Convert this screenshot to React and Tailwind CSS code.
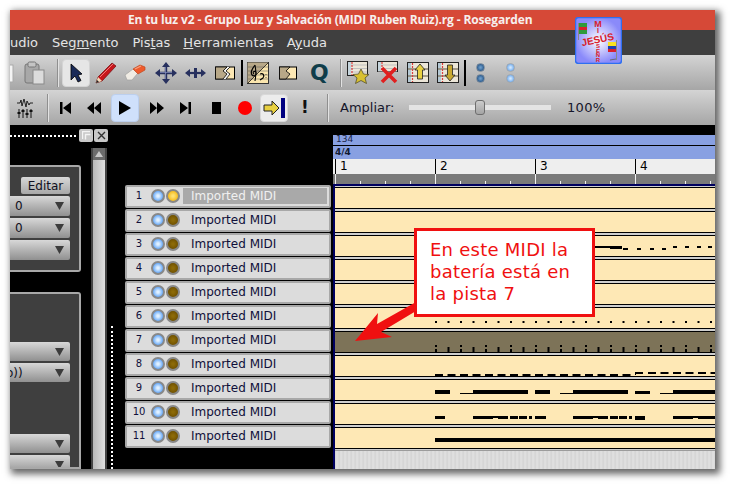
const UI = { fontFamily: '"DejaVu Sans", sans-serif' };

const TRACKS = [1, 2, 3, 4, 5, 6, 7, 8, 9, 10, 11];

const range = (start, end, step) => {
  const out = [];
  for (let x = start; x < end; x += step) out.push(x);
  return out;
};

// note drawings, x is relative to the start of the segment area (x=335)
const beats = range(100, 380, 12.5);
const NOTES = {
  3: [
    [260, 10, 27, 2], [275, 11, 12, 2], [288, 12, 5, 2], [302, 12, 4, 2], [315, 12, 4, 2], [327, 12, 4, 2],
    [338, 10, 4, 2], [350, 10, 4, 2], [362, 10, 4, 2], [373, 10, 4, 2],
  ],
  6: beats.map((x) => [x, 13, 2, 2]),
  7: beats.flatMap((x, i) =>
    i % 2 === 0 ? [[x, 13, 2, 2], [x, 17, 2, 3]] : [[x, 15, 2, 5]]
  ),
  8: [
    ...range(100, 300, 12.5).map((x) => [x, 18, 8, 2]),
    [300, 16, 1, 3], [300, 16, 8, 2],
    ...range(313, 380, 12.5).map((x) => [x, 16, 8, 2]),
  ],
  9: [
    [100, 10, 15, 4], [125, 13, 13, 1], [138, 10, 55, 4], [200, 10, 15, 4], [225, 13, 13, 1], [238, 10, 55, 4],
    [300, 11, 15, 3], [325, 13, 13, 1], [338, 10, 42, 4],
  ],
  10: [
    [100, 12, 10, 3], [138, 12, 20, 3], [158, 12, 5, 2], [163, 12, 10, 3], [175, 12, 8, 3], [184, 12, 8, 3], [194, 12, 3, 3], [200, 12, 11, 3],
    [238, 12, 20, 3], [258, 12, 5, 2], [263, 12, 10, 3], [275, 12, 8, 3], [284, 12, 8, 3], [294, 12, 3, 3],
    [300, 12, 10, 4], [338, 12, 20, 3], [358, 12, 5, 2], [363, 12, 17, 3],
  ],
  11: [[100, 10, 280, 4]],
};

function Doc() {
  return (
    <svg width="4" height="22" viewBox="0 0 4 22" className="shrink-0">
      <rect x="-6" y="3" width="9" height="17" fill="#f4f4f4" stroke="#aaa" />
    </svg>
  );
}

function Clipboard() {
  return (
    <svg width="21" height="24" viewBox="0 0 21 24" className="ml-[10px] shrink-0">
      <rect x="1" y="3" width="14" height="19" rx="2" fill="#a8a8a8" stroke="#777" />
      <rect x="4" y="1" width="8" height="5" rx="1.5" fill="#c4c4c4" stroke="#777" />
      <rect x="9" y="9" width="11" height="14" fill="#dcdcdc" stroke="#8a8a8a" />
    </svg>
  );
}

function Sep({ className }) {
  return <div className={`w-[2px] h-[28px] shrink-0 bg-[#e2e2e2] border-l border-[#8f8f8f] ${className}`} />;
}

function BlackSep({ className }) {
  return <div className={`w-[2px] h-[26px] shrink-0 bg-black ${className}`} />;
}

function Pointer() {
  return (
    <div className="ml-[3px] w-[28px] h-[28px] shrink-0 flex items-center justify-center bg-[#e6e6e6] rounded-sm border border-[#d4d4d4]">
      <svg width="14" height="20" viewBox="0 0 14 20">
        <path d="M2 1 L2 17 L6 13 L9 19 L12 17.5 L9 12 L13 11 Z" fill="#1a2a58" stroke="#000" strokeWidth="0.8" />
      </svg>
    </div>
  );
}

function Pencil() {
  return (
    <svg width="22" height="22" viewBox="0 0 22 22" className="ml-[5px] shrink-0">
      <path d="M1 21 L3 15 L17 1 L21 4 L7 19 Z" fill="#c8161c" stroke="#6d0a0d" strokeWidth="0.7" />
      <path d="M1 21 L3 15 L7 19 Z" fill="#f0d8b8" />
      <path d="M1 21 L2 18 L4 20 Z" fill="#222" />
      <path d="M5 15 L18 2" stroke="#f07a7a" strokeWidth="1" />
    </svg>
  );
}

function Eraser() {
  return (
    <svg width="22" height="18" viewBox="0 0 22 18" className="ml-[7px] shrink-0">
      <path d="M1 11 L9 5 L14 9 L8 16 L3 16 Z" fill="#f0ece4" stroke="#a0a0a0" strokeWidth="0.7" />
      <path d="M9 5 L16 1 L21 3 L21 6 L14 10 Z" fill="#ee5a2c" stroke="#c04a20" strokeWidth="0.7" />
      <path d="M11 5 L17 2" stroke="#f8a080" strokeWidth="1.2" />
    </svg>
  );
}

function MoveIcon() {
  return (
    <svg width="22" height="22" viewBox="0 0 22 22" className="ml-[9px] shrink-0">
      <path d="M11 3 V19 M3 11 H19" stroke="#27305e" strokeWidth="2.4" />
      <path d="M11 0 L15 5 H7 Z M11 22 L15 17 H7 Z M0 11 L5 7 V15 Z M22 11 L17 7 V15 Z" fill="#27305e" />
      <path d="M10.5 5 V17 M5 10.5 H17" stroke="#8a92c0" strokeWidth="0.7" />
    </svg>
  );
}

function ResizeIcon() {
  return (
    <svg width="21" height="12" viewBox="0 0 21 12" className="ml-[8px] shrink-0">
      <path d="M2 6 H19" stroke="#27305e" strokeWidth="2.2" />
      <path d="M0 6 L5 2 V10 Z M21 6 L16 2 V10 Z M9 1 H12 V11 H9 Z" fill="#27305e" />
    </svg>
  );
}

function SplitIcon({ className }) {
  return (
    <svg width="20" height="14" viewBox="0 0 20 14" className={`shrink-0 ${className}`}>
      <rect x="0.5" y="1" width="19" height="12" fill="#fde8b4" stroke="#000" />
      <path d="M12 1 L8 5 L12 8 L8 13 L11 13 L15 8 L11 5 L15 1 Z" fill="#f4f4f4" />
      <path d="M0.5 1 H12 L8 5 L12 8 L8 13 H0.5 Z" fill="#b8a888" stroke="#000" strokeWidth="0.8" />
      <path d="M15 1 L11 5 L15 8 L11 13" fill="none" stroke="#000" strokeWidth="0.8" />
    </svg>
  );
}

function JoinIcon({ className }) {
  return (
    <svg width="18" height="14" viewBox="0 0 18 14" className={`shrink-0 ${className}`}>
      <rect x="0.5" y="1" width="17" height="12" fill="#fde8b4" stroke="#000" />
      <path d="M0.5 1 H11 L7 5 L11 8 L7 13 H0.5 Z" fill="#b8a888" stroke="#000" strokeWidth="0.8" />
    </svg>
  );
}

function ScoreIcon() {
  return (
    <svg width="22" height="22" viewBox="0 0 22 22" className="ml-[4px] shrink-0">
      <rect x="0.5" y="0.5" width="21" height="21" fill="#fbe6ae" stroke="#333" />
      <path d="M0.5 21.5 L21.5 0.5 H0.5 Z" fill="#b8a888" />
      <path d="M1 5 H21 M1 9 H21 M1 13 H21 M1 17 H21" stroke="#555" strokeWidth="0.5" />
      <path d="M0.5 21.5 L21.5 0.5" stroke="#000" strokeWidth="0.7" />
      <path d="M8 3 C5 7 3 10 5 13 C7 15 10 13 9 10 C7 8 5 11 7 12 M8 3 C9 8 9 14 8 19" fill="none" stroke="#000" strokeWidth="1.1" />
      <path d="M13 12 C16 11 18 13 16 16 L13 18 M19 12.5 V13 M19 15 V15.5" fill="none" stroke="#000" strokeWidth="1.2" />
    </svg>
  );
}

// little score sheet behind the star and cross buttons
function SheetTop({ height }) {
  return (
    <>
      <rect x="0.5" y="0.5" width="20" height={height} fill="#ece6d8" stroke="#222" />
      <path d="M1 4 H20 M1 7.5 H20 M1 11 H20" stroke="#c0c0c0" strokeWidth="1" />
      <rect x="1" y="1" width="3" height={height - 1} fill="#c4d4dc" />
      <path d={`M5 1 V${height}`} stroke="#d83c3c" strokeWidth="1.2" strokeDasharray="2 1" />
    </>
  );
}

function StarIcon() {
  return (
    <svg width="23" height="23" viewBox="0 0 23 23" className="ml-[5px] shrink-0">
      <SheetTop height={14} />
      <path d="M14 8 L16.5 13 L22 13.5 L18 17 L19.5 22.5 L14 19.5 L8.5 22.5 L10 17 L6 13.5 L11.5 13 Z" fill="#d8c030" stroke="#555030" strokeWidth="0.8" />
    </svg>
  );
}

function DeleteIcon() {
  return (
    <svg width="22" height="23" viewBox="0 0 22 23" className="ml-[7px] shrink-0">
      <SheetTop height={10} />
      <path d="M5 7 L19 21 M19 7 L5 21" stroke="#e02020" strokeWidth="3.6" />
    </svg>
  );
}

function MoveSheetIcon({ className, d, fill }) {
  return (
    <svg width="22" height="21" viewBox="0 0 22 21" className={`shrink-0 ${className}`}>
      <rect x="0.5" y="0.5" width="21" height="20" fill="#ece6d8" stroke="#222" />
      <rect x="1" y="1" width="3" height="19" fill="#b4c8d4" />
      <path d="M1 7 H21 M1 14 H21" stroke="#8a8270" strokeWidth="1.6" />
      <path d="M5.5 1 V20" stroke="#d83c3c" strokeWidth="1.2" strokeDasharray="2 1" />
      <path d={d} fill={fill} stroke="#222" strokeWidth="0.8" />
    </svg>
  );
}

function Dots({ dark, className }) {
  const cls = dark
    ? 'bg-[radial-gradient(circle,#6c9cc8_10%,#2c5c90_70%)] border-[#7a8a9a]'
    : 'bg-[radial-gradient(circle,#d0e8ff_10%,#78b0f0_70%)] border-[#a0a8b0]';
  return (
    <div className={`w-[9px] flex flex-col gap-[2px] shrink-0 ${className}`}>
      <div className={`w-[9px] h-[9px] rounded-full border ${cls}`} />
      <div className={`w-[9px] h-[9px] rounded-full border ${cls}`} />
    </div>
  );
}

function Mixer() {
  return (
    <svg width="16" height="20" viewBox="0 0 16 20" className="ml-[7px] shrink-0">
      <path d="M0 5 H3 L4 2 L5 8 L7 1 L9 9 L10 3 L12 7 L13 5 H16" fill="none" stroke="#111" strokeWidth="0.9" />
      <path d="M2 11 V20 M6 11 V20 M10 11 V20 M14 11 V20" stroke="#111" strokeWidth="1" />
      <path d="M0.5 15 H3.5 M4.5 13 H7.5 M8.5 16 H11.5 M12.5 13 H15.5" stroke="#111" strokeWidth="2" />
    </svg>
  );
}

function Transport({ className, width = 14, d }) {
  return (
    <svg width={width} height="14" viewBox={`0 0 ${width} 14`} className={`shrink-0 ${className}`}>
      <path d={d} fill="#000" />
    </svg>
  );
}

function Logo() {
  return (
    <svg
      width="47"
      height="47"
      viewBox="0 0 47 47"
      className="absolute left-[575px] top-[17px]"
      style={{ fontFamily: '"Liberation Sans", sans-serif' }}
    >
      <defs>
        <radialGradient id="logoBg">
          <stop offset="0" stopColor="#ffffff" />
          <stop offset="1" stopColor="#8a8afa" />
        </radialGradient>
      </defs>
      <rect x="0.5" y="0.5" width="46" height="46" rx="3" fill="url(#logoBg)" stroke="#2f6ff0" strokeWidth="1.5" />
      <g fill="#d8202c" fontWeight="700" textAnchor="middle">
        <text x="23" y="10" fontSize="9">M</text>
        <text x="23" y="16" fontSize="7">I</text>
        <text x="23" y="26" fontSize="10" transform="rotate(-12 23 24)">JESÚS</text>
        <text x="23" y="31" fontSize="6">S</text>
        <text x="23" y="36" fontSize="6">E</text>
        <text x="23" y="40" fontSize="6">Ñ</text>
        <text x="23" y="45" fontSize="6">R</text>
      </g>
      <path d="M3.5 6 V23" stroke="#888" strokeWidth="1" />
      <rect x="4" y="6" width="8" height="4" fill="#2f9a3c" />
      <rect x="4" y="10" width="8" height="3" fill="#d8202c" />
      <rect x="4" y="13" width="8" height="4" fill="#2f9a3c" />
      <path d="M41.5 23 V43" stroke="#888" strokeWidth="1" />
      <rect x="33" y="25" width="8" height="4" fill="#f8e020" />
      <rect x="33" y="29" width="8" height="3" fill="#1c3fb0" />
      <rect x="33" y="32" width="8" height="3" fill="#d8202c" />
      <path d="M35 43 L41 42" stroke="#667" strokeWidth="1" />
    </svg>
  );
}

function Led({ color }) {
  const fill = {
    blue: 'bg-[radial-gradient(circle,#e0f0ff_15%,#5ea4f8_75%)]',
    amber: 'bg-[radial-gradient(circle,#ffe070_15%,#f4b818_75%)]',
    brown: 'bg-[radial-gradient(circle,#8c6a08_15%,#6e5000_75%)]',
  }[color];
  return <div className={`w-[14px] h-[14px] shrink-0 rounded-full border-2 border-[#888888] ${fill}`} />;
}

function TrackRow({ n }) {
  const selected = n === 1;
  return (
    <div className="h-[23px] w-[206px] pb-[2px] flex items-center bg-[#dcdcdc] border-2 border-[#a8a8a8] rounded-[2px]">
      <div className="w-[24px] shrink-0 text-center text-[10px] text-[#10103a]">{n}</div>
      <Led color="blue" />
      <div className="w-[1px] shrink-0" />
      <Led color={selected ? 'amber' : 'brown'} />
      <div
        className={`ml-[3px] w-[144px] h-[16px] pl-[8px] flex items-center text-[12px] ${
          selected ? 'bg-[#a9a9a9] text-[#f0f0f0]' : 'text-[#10103a]'
        }`}
      >
        Imported MIDI
      </div>
    </div>
  );
}

function SegmentRow({ n }) {
  const selected = n === 7;
  return (
    <div className="h-[24px] pt-[1px] bg-[#cfcfcf]">
      <div className={`h-[22px] border-y border-black ${selected ? 'bg-[#7d7358]' : 'bg-[#fee8b5]'}`}>
        <svg width="380" height="20" viewBox="0 0 380 20" className="block">
          {(NOTES[n] || []).map(([x, y, w, h], i) => (
            <rect key={i} x={x} y={y} width={w} height={h} fill="#000" />
          ))}
        </svg>
      </div>
    </div>
  );
}

function Combo({ label, className, labelClass = 'pl-[5px]' }) {
  return (
    <div
      className={`h-[19px] w-[60px] shrink-0 flex items-center justify-between pr-[6px] rounded-r-[2px] bg-gradient-to-b from-[#d8d8d8] to-[#909090] text-[12px] text-[#101020] ${className}`}
    >
      <span className={labelClass}>{label}</span>
      <svg width="9" height="8" viewBox="0 0 9 8">
        <path d="M0 0 H9 L4.5 8 Z" fill="#3c3c3c" />
      </svg>
    </div>
  );
}

export default function App() {
  return (
    <div className="w-[731px] h-[485px] bg-white pt-[10px] pl-[10px] relative overflow-hidden" style={UI}>
      <div className="w-[705px] h-[459px] flex flex-col shadow-[3px_3px_7px_2px_rgba(0,0,0,0.6)]">
        {/* title bar */}
        <div
          className="h-[20px] shrink-0 bg-[#d64937] pl-[118px] flex items-center text-[12px] tracking-[-0.14px] font-bold text-[#f6f0ee] whitespace-nowrap"
          style={{ fontFamily: '"Open Sans", sans-serif' }}
        >
          En tu luz v2 - Grupo Luz y Salvación (MIDI Ruben Ruiz).rg - Rosegarden
        </div>

        {/* menu */}
        <div className="h-[25px] shrink-0 bg-[#3f3f3f] flex items-center text-[13px] text-[#e4e4e4] whitespace-nowrap">
          <span>udio</span>
          <span className="ml-[14px]">Seg<span className="underline">m</span>ento</span>
          <span className="ml-[14px]">Pis<span className="underline">t</span>as</span>
          <span className="ml-[13px] tracking-[0.15px]"><span className="underline">H</span>erramientas</span>
          <span className="ml-[13px]">A<span className="underline">y</span>uda</span>
        </div>

        {/* edit toolbar */}
        <div className="h-[35px] shrink-0 flex items-center bg-gradient-to-b from-[#d4d4d4] to-[#a6a6a6]">
          <Doc />
          <Clipboard />
          <Sep className="ml-[12px]" />
          <Pointer />
          <Pencil />
          <Eraser />
          <MoveIcon />
          <ResizeIcon />
          <SplitIcon className="ml-[9px]" />
          <BlackSep className="ml-[6px]" />
          <ScoreIcon />
          <JoinIcon className="ml-[10px]" />
          <div className="ml-[13px] w-[18px] shrink-0 text-[22px] leading-none font-bold text-[#0f3d4a]">Q</div>
          <Sep className="ml-[12px]" />
          <StarIcon />
          <DeleteIcon />
          <MoveSheetIcon className="ml-[8px]" d="M13 2 L18 8 H15.5 V17 H10.5 V8 H8 Z" fill="#e8d040" />
          <MoveSheetIcon className="ml-[8px]" d="M13 19 L18 13 H15.5 V3 H10.5 V13 H8 Z" fill="#c8a830" />
          <BlackSep className="ml-[5px]" />
          <Dots dark className="ml-[10px]" />
          <Dots className="ml-[21px]" />
        </div>

        {/* transport toolbar */}
        <div className="h-[35px] shrink-0 flex items-center bg-gradient-to-b from-[#d4d4d4] to-[#a6a6a6]">
          <Mixer />
          <Sep className="ml-[14px]" />
          <Transport className="ml-[11px]" width={11} d="M0 1 H2.5 V13 H0 Z M11 1 V13 L3 7 Z" />
          <Transport className="ml-[16px]" d="M7 1 V13 L0 7 Z M14 1 V13 L7 7 Z" />
          <div className="ml-[10px] w-[28px] h-[28px] shrink-0 flex items-center justify-center bg-[#cfe0fb] rounded-sm border border-[#bccfee]">
            <Transport width={12} d="M0 0 L12 7 L0 14 Z" />
          </div>
          <Transport className="ml-[11px]" d="M0 1 L7 7 L0 13 Z M7 1 L14 7 L7 13 Z" />
          <Transport className="ml-[16px]" width={11} d="M0 1 L8 7 L0 13 Z M8.5 1 H11 V13 H8.5 Z" />
          <Transport className="ml-[21px]" width={9} d="M0 1 H9 V13 H0 Z" />
          <svg width="14" height="14" viewBox="0 0 14 14" className="ml-[17px] shrink-0">
            <circle cx="7" cy="7" r="7" fill="#f00" />
          </svg>
          <div className="ml-[8px] w-[28px] h-[28px] shrink-0 flex items-center justify-center bg-[#ececec] rounded-sm border border-[#d8d8d8]">
            <svg width="22" height="20" viewBox="0 0 22 20">
              <path d="M1 7 H9 V3 L16 10 L9 17 V13 H1 Z" fill="#e8d040" stroke="#222" strokeWidth="1" />
              <rect x="18" y="0" width="4" height="20" fill="#000080" />
            </svg>
          </div>
          <div className="ml-[12px] w-[10px] text-center text-[17px] leading-none font-bold text-[#111] shrink-0">!</div>
          <Sep className="ml-[17px]" />
          <span className="ml-[11px] text-[13px] text-[#15152a] w-[69px] shrink-0">Ampliar:</span>
          <div className="w-[142px] h-[5px] shrink-0 bg-[#e4e4e4] flex items-center">
            <div className="ml-[66px] w-[10px] h-[15px] rounded-[3px] bg-gradient-to-b from-[#cccccc] to-[#a4a4a4] border border-[#6e6e6e]" />
          </div>
          <span className="ml-[16px] text-[13px] text-[#15152a] tracking-[0.3px]">100%</span>
        </div>

        {/* main area */}
        <div className="flex-1 min-h-0 bg-black flex overflow-hidden">
          {/* instrument parameter panel */}
          <div className="w-[98px] shrink-0 flex flex-col">
            <div className="h-[23px] shrink-0 flex items-start pt-[4px]">
              <div className="w-[66px] mt-[6px] border-t-2 border-dotted border-white" />
              <div className="ml-[3px] w-[14px] h-[13px] rounded-[2px] bg-[#c8c8c8] flex items-center justify-center">
                <svg width="9" height="9" viewBox="0 0 9 9">
                  <path d="M0.5 8 V0.5 H8 M3.5 8.5 V3.5 H8.5" fill="none" stroke="#f4f4f4" strokeWidth="1.4" />
                </svg>
              </div>
              <div className="ml-[1px] w-[14px] h-[13px] rounded-[2px] bg-[#c8c8c8] flex items-center justify-center">
                <svg width="9" height="9" viewBox="0 0 9 9">
                  <path d="M1 1 L8 8 M8 1 L1 8" stroke="#333" strokeWidth="1.4" />
                </svg>
              </div>
            </div>
            <div className="flex-1 min-h-0 flex">
              <div className="w-[71px] shrink-0 pt-[17px] flex flex-col">
                <div className="h-[107px] shrink-0 bg-[#3f3f3f] border-2 border-l-0 border-[#a8a8a8] rounded-r-[3px] pt-[10px] flex flex-col">
                  <div className="ml-[11px] w-[49px] h-[17px] rounded-[2px] bg-gradient-to-b from-[#d8d8d8] to-[#a8a8a8] flex items-center justify-center text-[12px] text-[#101020]">
                    Editar
                  </div>
                  <Combo label="0" className="mt-[2px] h-[20px]" />
                  <Combo label="0" className="mt-[2px] h-[20px]" />
                  <Combo label="" className="mt-[2px] h-[20px]" />
                </div>
                <div className="mt-[20px] flex-1 min-h-0 overflow-hidden bg-[#3f3f3f] border-2 border-l-0 border-[#a8a8a8] rounded-tr-[3px] pt-[48px] flex flex-col">
                  <Combo label="" />
                  <Combo label="o))" className="mt-[2px]" labelClass="-ml-[4px]" />
                  <Combo label="" className="mt-[52px]" />
                  <Combo label="" className="mt-[2px]" />
                </div>
              </div>
              <div className="ml-[10px] w-[16px] shrink-0 border-x-2 border-[#444] bg-gradient-to-r from-[#b8b8b8] to-[#e0e0e0] flex flex-col">
                <div className="h-[12px] bg-[#6c6c6c] flex items-center justify-center">
                  <svg width="8" height="6" viewBox="0 0 8 6">
                    <path d="M4 0 L8 6 H0 Z" fill="#c8c8c8" />
                  </svg>
                </div>
              </div>
            </div>
          </div>

          {/* dotted splitter */}
          <div className="w-[17px] shrink-0 pt-[201px] pl-[3px]">
            <div className="h-full border-l-2 border-dotted border-white" />
          </div>

          {/* track buttons */}
          <div className="w-[206px] shrink-0 pt-[60px] flex flex-col gap-[1px]">
            {TRACKS.map((n) => (
              <TrackRow key={n} n={n} />
            ))}
          </div>

          {/* segment canvas */}
          <div className="ml-[2px] w-[382px] shrink-0 pt-[10px] flex flex-col">
            <div className="h-[11px] shrink-0 bg-[#88a0e2] border-b border-black pl-[3px] flex items-center text-[9px] text-[#18244a]">
              134
            </div>
            <div className="h-[13px] shrink-0 bg-[#88a0e2] pl-[2px] flex items-center text-[9px] font-bold text-[#101830]">
              4/4
            </div>
            <div className="h-[15px] shrink-0 pl-[2px] bg-[#eeeeee] flex">
              {['1', '2', '3', '4'].map((bar) => (
                <div key={bar} className="w-[100px] shrink-0 border-l border-black pl-[4px] text-[12px] leading-[15px] text-black">
                  {bar}
                </div>
              ))}
            </div>
            <svg width="382" height="10" viewBox="0 0 382 10" className="block shrink-0 bg-[#7a7a7a]">
              {range(2, 382, 25).map((x, i) => (
                <rect key={x} x={x} y={i % 4 === 0 ? 0 : 7} width="1" height={i % 4 === 0 ? 10 : 3} fill="#f0f0f0" />
              ))}
            </svg>
            <div className="flex-1 min-h-0 flex border-t-2 border-[#000060]">
              <div className="w-[2px] shrink-0 bg-[#000060]" />
              <div className="flex-1 min-w-0 flex flex-col">
                {TRACKS.map((n) => (
                  <SegmentRow key={n} n={n} />
                ))}
                <div className="flex-1 border-t border-[#9c9c9c] bg-[#d8d8d8] bg-[repeating-linear-gradient(90deg,#d2d2d2_0px,#e2e2e2_2px,#d6d6d6_4px)]" />
              </div>
            </div>
          </div>
        </div>
      </div>

      <Logo />

      {/* annotation over the canvas */}
      <svg width="731" height="485" viewBox="0 0 731 485" className="absolute left-0 top-0 pointer-events-none">
        <polygon points="355,341 378,313 377,324 416,302 416,311 381,332 392,337" fill="#f01010" />
      </svg>
      <div className="absolute left-[414px] top-[228px] w-[181px] h-[89px] bg-white border-[3px] border-[#f01010] pl-[13px] pt-[8px] text-[18px] tracking-[0.25px] leading-[22px] text-[#f01010]">
        En este MIDI la
        <br />
        batería está en
        <br />
        la pista 7
      </div>
    </div>
  );
}
